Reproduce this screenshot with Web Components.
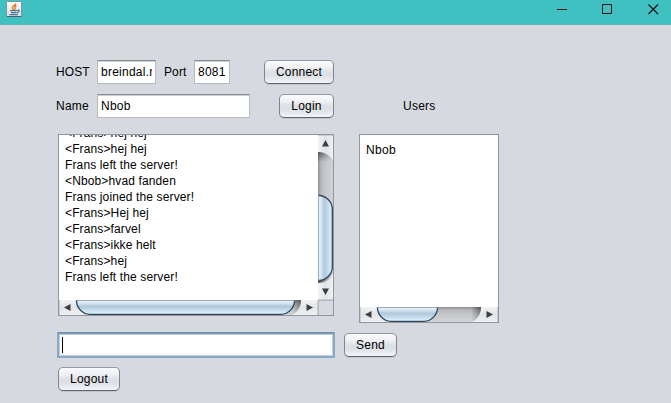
<!DOCTYPE html>
<html lang="en">
<head>
<meta charset="utf-8">
<title>Chat client</title>
<style>
html,body{margin:0;height:100%;overflow:hidden;background:#d6d9df}
body{font:12px "Liberation Sans",Arial,sans-serif;color:#000}
</style>
</head>
<body>
<chat-window></chat-window>
<script>
const define = (name, html, setup) => customElements.define(name, class extends HTMLElement {
  constructor() {
    super();
    this.attachShadow({ mode: 'open' }).innerHTML = html;
  }
  connectedCallback() { if (setup) setup(this, this.shadowRoot); }
});

define('title-bar', `
<style>
:host{display:flex;height:25px;box-sizing:border-box;background:#40c0c0;justify-content:space-between;padding:1px 12px 0 6px;border-bottom:1px solid #58b8bb}
.controls{display:flex;gap:34px;padding-top:2px}
svg{display:block}
</style>
<svg width="17" height="17" viewBox="0 0 17 17">
  <defs><linearGradient id="j" x2="0" y2="1"><stop stop-color="#fdfdfd"/><stop offset="1" stop-color="#d5dde3"/></linearGradient></defs>
  <rect x=".5" y=".5" width="15" height="15" rx="1" fill="url(#j)" stroke="#7d9299"/>
  <path d="M1 15.500h14.500" stroke="#44606d"/>
  <path d="M10 2.500C9.500 4.500 6 5 6.300 6.800 6.500 7.600 7.300 7.900 7.500 8.800M10.500 4.800C8.800 5.500 8.500 6.300 9 7 9.400 7.600 9 8.200 8.600 8.800" fill="none" stroke="#df7f2c" stroke-width="1.500"/>
  <path d="M4 9.700h7M5 11.700h5.500M3.500 13.700h8.500" fill="none" stroke="#4f7394" stroke-width="1.300"/>
  <path d="M11.200 9.300c2.700-1 2.700 1.600-.4 2.600" fill="none" stroke="#4f7394" stroke-width="1.200"/>
</svg>
<div class="controls">
  <svg width="11" height="12" viewBox="0 0 11 12"><path d="M0 6.500h10" stroke="#111"/></svg>
  <svg width="11" height="12" viewBox="0 0 11 12"><path d="M.5 1.500h9v9h-9z" fill="none" stroke="#111"/></svg>
  <svg width="11" height="12" viewBox="0 0 11 12" style="margin-left:1px"><path d="M.5 1.500l9.500 9.500M10 1.500L.5 11" stroke="#111" stroke-width="1.150"/></svg>
</div>`);

define('nim-label', `<style>:host{display:block;line-height:25px;height:24px;white-space:nowrap;letter-spacing:var(--track,.1px)}</style><slot></slot>`);

define('nim-button', `
<style>
:host{display:block;box-sizing:border-box;height:24px;line-height:23px;text-align:center;white-space:nowrap;border:1px solid;border-color:#9699a0 #80848c #5e636c;border-radius:5px;background:linear-gradient(#fbfbfc,#eef0f2 30%,#dcdfe4 52%,#dee1e6 70%,#f3f5f8);box-shadow:0 1px 0 #c2c5cb;letter-spacing:.2px}
</style><slot></slot>`);

define('nim-field', `
<style>
:host{display:block;box-sizing:border-box;height:24px;border:1px solid #b8babf;border-top-color:#898b90;background:linear-gradient(#cfd0d2 0,#cfd0d2 1px,#fff 1px);padding:0 3px;line-height:23px;white-space:nowrap;letter-spacing:.25px}
.clip{overflow:hidden;height:22px}
:host([focused]){height:26px;border:2px solid #83a5c5;border-color:#7393ae #88aac9 #88a9c6;box-shadow:inset 0 0 0 1px #c3cdd6;background:#fff;padding:3px}
.caret{display:none;width:1px;height:16px;background:#000}
:host([focused]) .clip{height:16px}
:host([focused]) .caret{display:block}
</style><div class="clip"><div class="caret"></div><slot></slot></div>`);

define('nim-scroll', `<style>:host{display:block;line-height:0}svg{display:block}</style><svg></svg>`, (el, root) => {
  const n = +el.getAttribute('length'), s = +el.getAttribute('from'), e = +el.getAttribute('to');
  const vertical = el.hasAttribute('vertical');
  const svg = root.querySelector('svg');
  svg.setAttribute('width', vertical ? 15 : n);
  svg.setAttribute('height', vertical ? n : 15);
  svg.innerHTML = `
  <defs>
    <linearGradient id="b" x2="0" y2="1"><stop stop-color="#f2f3f4"/><stop offset=".5" stop-color="#e2e4e6"/><stop offset="1" stop-color="#f0f1f3"/></linearGradient>
    <linearGradient id="t" x2="0" y2="1"><stop stop-color="#8e8f92"/><stop offset=".2" stop-color="#b7b8bb"/><stop offset=".5" stop-color="#c6c7ca"/><stop offset="1" stop-color="#d2d3d6"/></linearGradient>
    <linearGradient id="h" x2="0" y2="1"><stop stop-color="#8399af"/><stop offset=".07" stop-color="#edf4fa"/><stop offset=".2" stop-color="#e3edf5"/><stop offset=".34" stop-color="#cbdae7"/><stop offset=".48" stop-color="#b0c8dc"/><stop offset=".75" stop-color="#c6deee"/><stop offset="1" stop-color="#e5f5ff"/></linearGradient>
    <linearGradient id="d"><stop stop-color="#444" stop-opacity="0"/><stop offset="1" stop-color="#444" stop-opacity=".85"/></linearGradient>
    <mask id="m" maskContentUnits="objectBoundingBox"><rect width="1" height="1" fill="url(#g)"/></mask>
    <linearGradient id="g" x2="0" y2="1"><stop stop-color="#fff"/><stop offset="1" stop-color="#222"/></linearGradient>
  </defs>
  <g ${vertical ? 'transform="matrix(0 1 1 0 0 0)"' : ''}>
    <rect width="${n}" height="15" fill="url(#b)"/>
    <path d="M.5 0V15M${n - .5} 0V15" stroke="#c9ccd2"/>
    <path d="M17 0H${n - 17}C${n - 17} 6 ${n - 20} 12 ${n - 26} 15H26C20 12 17 6 17 0Z" fill="url(#t)"/>
    <path mask="url(#m)" d="M${n - 27} 0H${n - 17}C${n - 17} 6 ${n - 20} 12 ${n - 26} 15Z" fill="url(#d)"/>
    ${vertical ? '<path mask="url(#m)" transform="matrix(-1 0 0 1 44 0)" d="M17 0H27C27 6 24 12 18 15Z" fill="url(#d)"/>' : ''}
    <path d="M${s + .5} -1V1C${s + .5} 7 ${s + 6} 14.300 ${s + 14} 14.300H${e - 14}C${e - 6} 14.300 ${e - .5} 7 ${e - .5} 1V-1Z" fill="url(#h)" stroke="#2e475e" stroke-width="1.300"/>
    <path d="M${s} .5H${e}" stroke="#8297aa" stroke-opacity=".8"/>
    <path d="M5 7.500L11.500 4V11ZM${n - 5} 7.500L${n - 11.500} 4V11Z" fill="#3c3f43"/>
  </g>`;
});

define('message-pane', `
<style>
:host{display:grid;box-sizing:border-box;width:276px;height:182px;border:1px solid #92959d;grid-template:165px 15px / 259px 15px;background:#d6d9df}
.view{background:#fff;overflow:hidden;display:flex;flex-direction:column;justify-content:flex-end;padding:0 6px 15px;line-height:16px;white-space:nowrap;letter-spacing:.13px}
.corner{background:#d6d9df;box-shadow:inset 1px 1px #b4b7be}
</style>
<div class="view"><slot></slot></div>
<nim-scroll vertical length="165" from="60" to="146"></nim-scroll>
<nim-scroll length="259" from="17" to="236"></nim-scroll>
<div class="corner"></div>`);

define('user-list', `
<style>
:host{display:grid;box-sizing:border-box;width:140px;height:189px;border:1px solid #92959d;grid-template:172px 15px / 138px}
.view{background:#fff;padding:7px 6px;line-height:16px;letter-spacing:.3px}
</style>
<div class="view"><slot></slot></div>
<nim-scroll length="138" from="17" to="78"></nim-scroll>`);

define('chat-window', `
<style>
:host{display:block;width:671px;height:403px;background:#d6d9df;overflow:hidden}
.row{display:flex}
.host{padding:35px 0 0 56px}
.name{padding:10px 0 0 56px;--track:.25px}
.panes{padding:16px 0 0 58px;gap:25px;height:189px}
.send{padding:9px 0 0 57px;gap:9px}
.out{padding:9px 0 0 58px}
</style>
<title-bar></title-bar>
<div class="row host">
  <nim-label style="width:41px">HOST</nim-label><nim-field style="width:59px">breindal.n</nim-field>
  <nim-label style="width:30px;margin-left:8px">Port</nim-label><nim-field style="width:36px">8081</nim-field>
  <nim-button style="width:70px;margin-left:34px">Connect</nim-button>
</div>
<div class="row name">
  <nim-label style="width:41px">Name</nim-label><nim-field style="width:153px">Nbob</nim-field>
  <nim-button style="width:55px;margin-left:29px">Login</nim-button>
  <nim-label style="margin-left:69px">Users</nim-label>
</div>
<div class="row panes">
  <message-pane>
    <div>&lt;Frans&gt;hej hej</div><div>&lt;Frans&gt;hej hej</div><div>Frans left the server!</div><div>&lt;Nbob&gt;hvad fanden</div><div>Frans joined the server!</div><div>&lt;Frans&gt;Hej hej</div><div>&lt;Frans&gt;farvel</div><div>&lt;Frans&gt;ikke helt</div><div>&lt;Frans&gt;hej</div><div>Frans left the server!</div>
  </message-pane>
  <user-list>Nbob</user-list>
</div>
<div class="row send"><nim-field focused style="width:278px"></nim-field><nim-button style="width:53px;margin-top:1px">Send</nim-button></div>
<div class="row out"><nim-button style="width:62px">Logout</nim-button></div>`);
</script>
</body>
</html>
